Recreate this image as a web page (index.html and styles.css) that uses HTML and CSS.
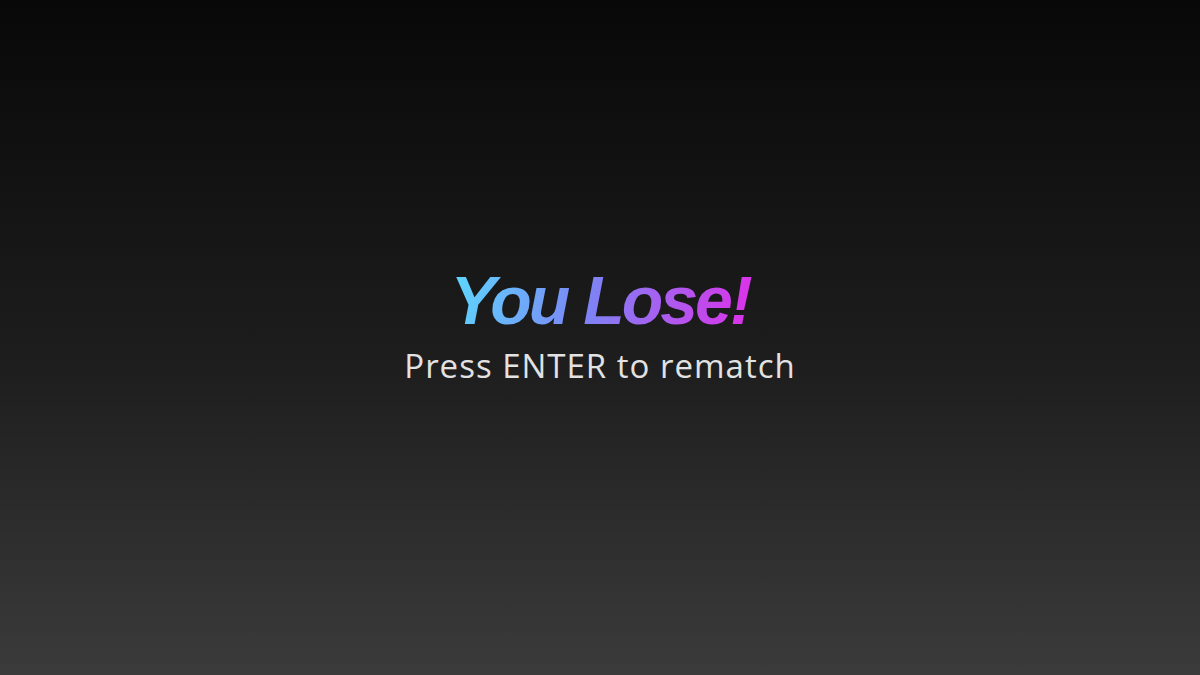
FILE: index.html
```html
<!DOCTYPE html>
<html lang="en">
<head>
<meta charset="utf-8">
<title>You Lose!</title>
<link rel="stylesheet" href="styles.css">
</head>
<body>
<main class="screen">
  <div class="result">
    <h1 class="title">You Lose!</h1>
    <p class="hint">Press ENTER to rematch</p>
  </div>
</main>
</body>
</html>
```
FILE: styles.css
```css
html, body {
  margin: 0;
  padding: 0;
  height: 100%;
}
body {
  background: linear-gradient(to bottom, #080808 0%, #1e1e1e 55%, #3b3b3b 100%);
}
.screen {
  height: 675px;
  display: flex;
  align-items: center;
  justify-content: center;
}
.result {
  display: flex;
  flex-direction: column;
  align-items: center;
  padding-bottom: 24px;
}
.title {
  margin: 0;
  padding: 0 4px;
  font-family: "Liberation Sans", Arial, sans-serif;
  font-weight: 700;
  font-style: italic;
  font-size: 68px;
  line-height: 1;
  letter-spacing: -3px;
  display: inline-block;
  background: linear-gradient(100deg, #5cdcff 0%, #7b86f5 45%, #e02ee8 100%);
  -webkit-background-clip: text;
  background-clip: text;
  color: transparent;
}
.hint {
  margin: 12px 0 0;
  font-family: "Open Sans", Lato, sans-serif;
  font-size: 33px;
  line-height: 1.2;
  letter-spacing: 1px;
  color: #e2e2e2;
}
```
